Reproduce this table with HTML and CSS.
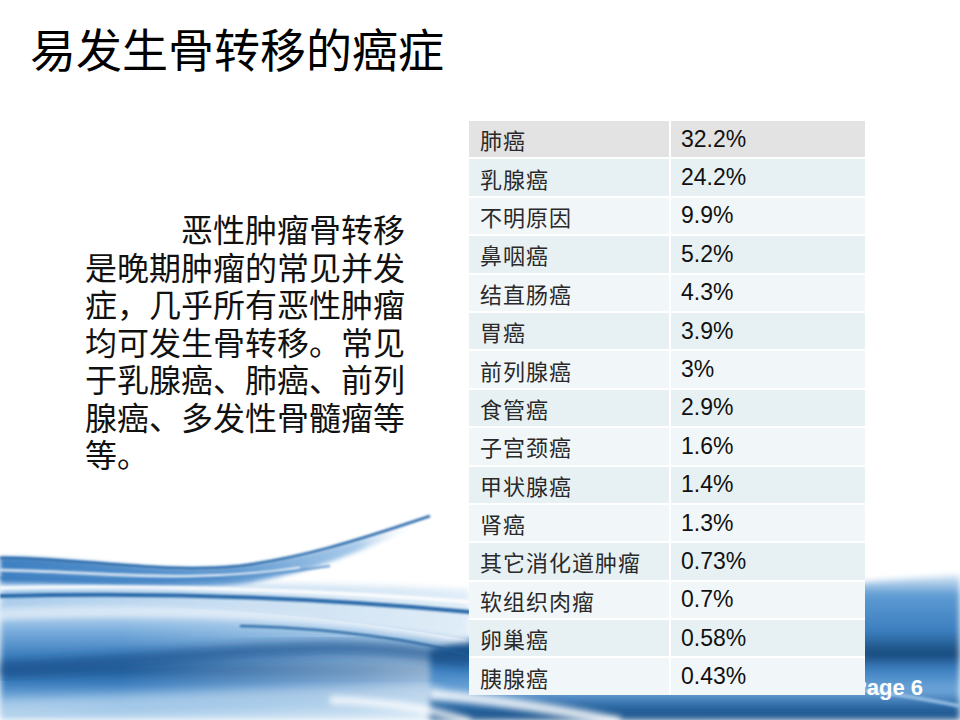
FILE: index.html
```html
<!DOCTYPE html>
<html lang="zh-CN">
<head>
<meta charset="utf-8">
<title>易发生骨转移的癌症</title>
<link rel="stylesheet" href="styles.css">
</head>
<body>
<div class="slide">
  <svg class="bg" viewBox="0 0 960 720" width="960" height="720" aria-hidden="true">
    <defs>
      <filter id="blur6" x="-10%" y="-50%" width="120%" height="200%"><feGaussianBlur stdDeviation="6"/></filter>
      <filter id="blur3" x="-10%" y="-50%" width="120%" height="200%"><feGaussianBlur stdDeviation="3"/></filter>
      <filter id="blur2" x="-10%" y="-50%" width="120%" height="200%"><feGaussianBlur stdDeviation="2"/></filter>
      <filter id="blur1" x="-10%" y="-50%" width="120%" height="200%"><feGaussianBlur stdDeviation="1"/></filter>
      <linearGradient id="gLeft" gradientUnits="userSpaceOnUse" x1="0" y1="608" x2="0" y2="720">
        <stop offset="0" stop-color="#cfe2f3"/>
        <stop offset="0.2" stop-color="#7aaedd"/>
        <stop offset="0.42" stop-color="#3f7fbf"/>
        <stop offset="0.55" stop-color="#215c99"/>
        <stop offset="0.68" stop-color="#3d7fc0"/>
        <stop offset="0.82" stop-color="#7eb1de"/>
        <stop offset="1" stop-color="#c2dcf1"/>
      </linearGradient>
      <linearGradient id="gFade" gradientUnits="userSpaceOnUse" x1="120" y1="0" x2="520" y2="0">
        <stop offset="0" stop-color="#ffffff" stop-opacity="0"/>
        <stop offset="0.6" stop-color="#ffffff" stop-opacity="0.35"/>
        <stop offset="1" stop-color="#ffffff" stop-opacity="0.7"/>
      </linearGradient>
      <linearGradient id="gRight" gradientUnits="userSpaceOnUse" x1="0" y1="575" x2="0" y2="720">
        <stop offset="0" stop-color="#dbe9f6"/>
        <stop offset="0.14" stop-color="#5d9bd3"/>
        <stop offset="0.38" stop-color="#3d80c0"/>
        <stop offset="0.55" stop-color="#174a7c"/>
        <stop offset="0.64" stop-color="#3a7dbe"/>
        <stop offset="0.8" stop-color="#6fa7da"/>
        <stop offset="0.9" stop-color="#2d6aa6"/>
        <stop offset="1" stop-color="#1b4f85"/>
      </linearGradient>
      <linearGradient id="gTop" gradientUnits="userSpaceOnUse" x1="0" y1="0" x2="420" y2="0">
        <stop offset="0" stop-color="#3f80c2"/>
        <stop offset="0.55" stop-color="#5f98d0"/>
        <stop offset="0.85" stop-color="#a9cbea"/>
        <stop offset="1" stop-color="#ffffff" stop-opacity="0"/>
      </linearGradient>
      <linearGradient id="gMid" gradientUnits="userSpaceOnUse" x1="0" y1="0" x2="470" y2="0">
        <stop offset="0" stop-color="#8dbbe4"/>
        <stop offset="0.5" stop-color="#b9d5ee"/>
        <stop offset="1" stop-color="#d6e7f5"/>
      </linearGradient>
    </defs>
    <!-- soft light base between streaks -->
    <path d="M0,580 C150,586 300,580 470,590 L470,640 C300,612 150,606 0,612 Z" fill="url(#gMid)" opacity="0.75" filter="url(#blur3)"/>
    <!-- left body of the wave -->
    <path d="M0,608 C150,602 300,610 470,640 L720,720 L0,720 Z" fill="url(#gLeft)" filter="url(#blur3)"/>
    <path d="M0,608 C150,602 300,610 470,640 L720,720 L0,720 Z" fill="url(#gFade)"/>
    <!-- right body of the wave -->
    <path d="M430,650 C600,605 800,586 960,575 L960,720 L430,720 Z" fill="url(#gRight)" filter="url(#blur3)"/>
    <!-- top band left -->
    <path d="M0,557 C80,557 160,574 240,566 C300,558 350,544 410,524 L416,527 C350,556 300,576 240,584 C160,590 80,584 0,583 Z" fill="url(#gTop)" filter="url(#blur2)"/>
    <path d="M0,558 C80,558 160,574 240,566 C300,558 350,543 430,516" fill="none" stroke="#2566a8" stroke-width="2.5" filter="url(#blur1)"/>
    <path d="M0,570 C100,572 200,584 300,568" fill="none" stroke="#ffffff" stroke-width="3" opacity="0.75" filter="url(#blur1)"/>
    <path d="M0,578 C100,580 200,586 330,566" fill="none" stroke="#3e7ec0" stroke-width="2" opacity="0.8" filter="url(#blur1)"/>
    <!-- middle thin streak -->
    <path d="M0,596 C150,592 300,596 470,612" fill="none" stroke="#2a69a9" stroke-width="4" filter="url(#blur1)"/>
    <path d="M0,588 C150,585 300,589 470,602" fill="none" stroke="#ffffff" stroke-width="4" opacity="0.85" filter="url(#blur1)"/>
    <!-- band dark core -->
    <path d="M0,670 C100,664 220,650 330,648 C400,648 440,654 470,662" fill="none" stroke="#1b5490" stroke-width="10" filter="url(#blur6)"/>
    <path d="M0,616 C150,610 300,612 470,640" fill="none" stroke="#ffffff" stroke-width="6" opacity="0.6" filter="url(#blur3)"/>
    <path d="M240,626 C330,628 420,640 470,656" fill="none" stroke="#1f5d9a" stroke-width="2" filter="url(#blur1)"/>
    <!-- lower highlights -->
    <path d="M0,706 C150,700 300,692 440,690" fill="none" stroke="#ffffff" stroke-width="6" opacity="0.5" filter="url(#blur6)"/>
    <path d="M430,694 C500,700 560,710 620,722" fill="none" stroke="#ffffff" stroke-width="10" opacity="0.85" filter="url(#blur3)"/>
    <path d="M330,700 C400,702 440,712 470,722" fill="none" stroke="#ffffff" stroke-width="8" opacity="0.8" filter="url(#blur3)"/>
    <path d="M860,690 C900,694 930,700 960,706" fill="none" stroke="#9cc4e8" stroke-width="4" opacity="0.8" filter="url(#blur1)"/>
  </svg>

  <div class="page-num">Page 6</div>

  <div class="content">
    <h1 class="title">易发生骨转移的癌症</h1>
    <div class="main">
      <p class="lead">恶性肿瘤骨转移是晚期肿瘤的常见并发症，几乎所有恶性肿瘤均可发生骨转移。常见于乳腺癌、肺癌、前列腺癌、多发性骨髓瘤等等。</p>
      <div class="tbl">
        <div class="cell head name">肺癌</div><div class="cell head num">32.2%</div>
        <div class="cell odd name">乳腺癌</div><div class="cell odd num">24.2%</div>
        <div class="cell even name">不明原因</div><div class="cell even num">9.9%</div>
        <div class="cell odd name">鼻咽癌</div><div class="cell odd num">5.2%</div>
        <div class="cell even name">结直肠癌</div><div class="cell even num">4.3%</div>
        <div class="cell odd name">胃癌</div><div class="cell odd num">3.9%</div>
        <div class="cell even name">前列腺癌</div><div class="cell even num">3%</div>
        <div class="cell odd name">食管癌</div><div class="cell odd num">2.9%</div>
        <div class="cell even name">子宫颈癌</div><div class="cell even num">1.6%</div>
        <div class="cell odd name">甲状腺癌</div><div class="cell odd num">1.4%</div>
        <div class="cell even name">肾癌</div><div class="cell even num">1.3%</div>
        <div class="cell odd name">其它消化道肿瘤</div><div class="cell odd num">0.73%</div>
        <div class="cell even name">软组织肉瘤</div><div class="cell even num">0.7%</div>
        <div class="cell odd name">卵巢癌</div><div class="cell odd num">0.58%</div>
        <div class="cell even name">胰腺癌</div><div class="cell even num">0.43%</div>
      </div>
    </div>
  </div>
</div>
</body>
</html>
```

FILE: styles.css
```css
html, body {
  margin: 0;
  padding: 0;
  background: #ffffff;
}

.slide {
  position: relative;
  width: 960px;
  height: 720px;
  overflow: hidden;
  background: #ffffff;
  font-family: "Noto Sans CJK SC", "Liberation Sans", sans-serif;
  color: #000000;
}

.bg {
  position: absolute;
  left: 0;
  top: 0;
  z-index: 0;
}

.page-num {
  position: absolute;
  right: 37px;
  top: 677px;
  z-index: 1;
  font-family: "Liberation Sans", Arial, sans-serif;
  font-weight: bold;
  font-size: 22px;
  line-height: 22px;
  color: #ffffff;
}

.content {
  position: relative;
  z-index: 2;
  padding: 24px 0 0 30px;
}

.title {
  margin: 0;
  font-family: "Noto Sans CJK SC", sans-serif;
  font-weight: 400;
  font-size: 46px;
  line-height: 46px;
  height: 46px;
  color: #000000;
}

.main {
  display: flex;
  align-items: flex-start;
  margin-top: 51px;
}

.lead {
  margin: 89px 0 0 55px;
  width: 321px;
  font-family: "Noto Sans CJK SC", sans-serif;
  font-size: 32px;
  line-height: 37.5px;
  text-indent: 96px;
  color: #111111;
}

.tbl {
  margin-left: 63px;
  display: grid;
  grid-template-columns: 200px 194px;
  grid-auto-rows: 36.4px;
  column-gap: 2px;
  row-gap: 2px;
  background: #ffffff;
}

.cell {
  display: flex;
  align-items: center;
  white-space: nowrap;
}

.cell.head { background: #e3e3e3; }
.cell.odd { background: #e7f1f4; }
.cell.even { background: #f1f6f9; }

.name {
  padding-left: 11px;
  font-family: "Noto Sans CJK SC", sans-serif;
  font-size: 22px;
  letter-spacing: 1px;
  color: #2a2a2a;
}

.num {
  padding-left: 10px;
  font-family: "Liberation Sans", Arial, sans-serif;
  font-size: 23px;
  color: #111111;
}
```
